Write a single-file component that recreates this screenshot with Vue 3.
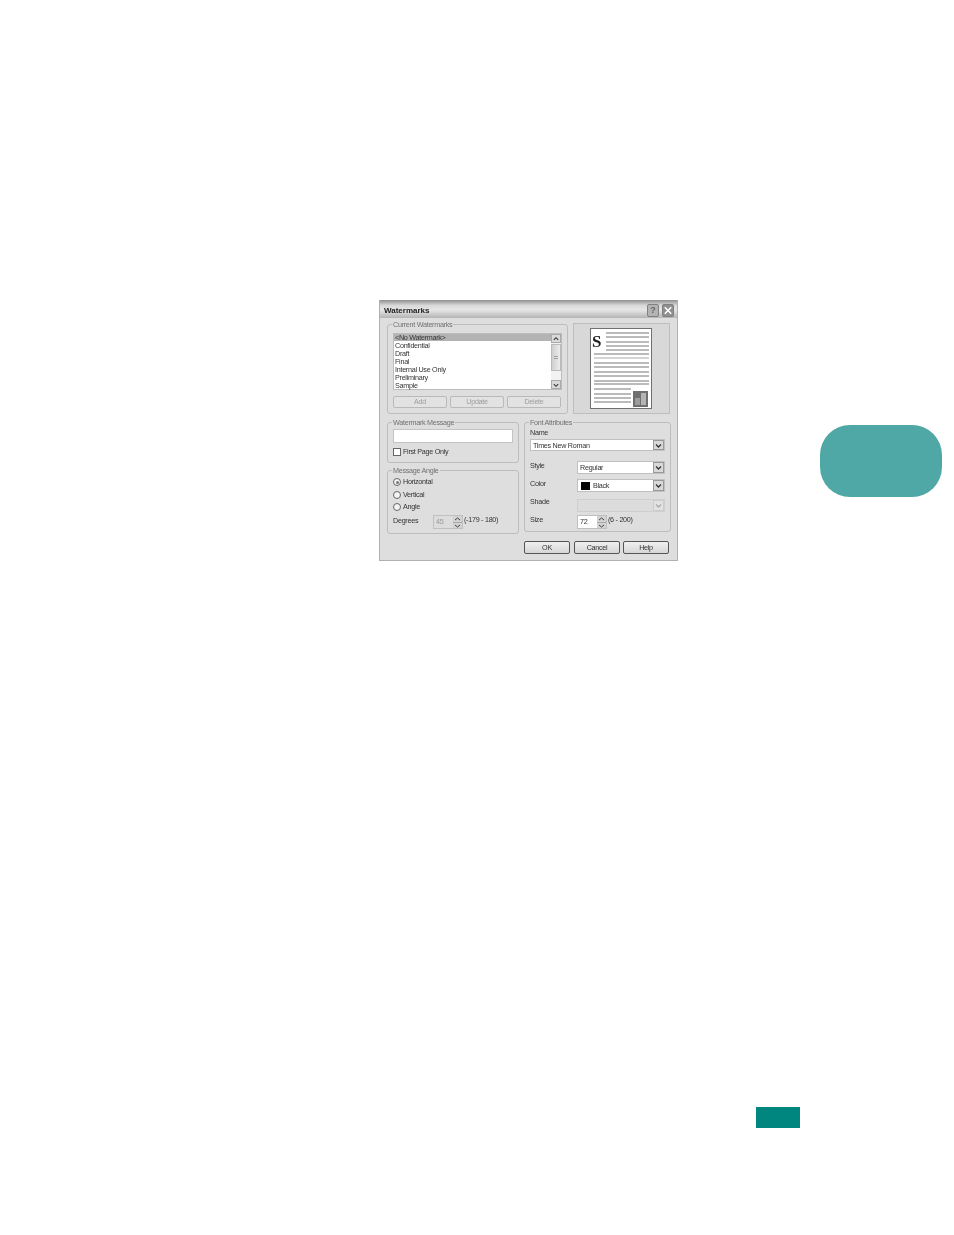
<script setup>
const items = ['<No Watermark>', 'Confidential', 'Draft', 'Final', 'Internal Use Only', 'Preliminary', 'Sample']
const topLines = [333, 337, 342, 346, 350]
const fullLines = [354, 358, 363, 367, 372, 376, 381, 384]
const shortLines = [389, 394, 398, 402]
</script>

<template>
  <div class="page">
    <div class="top-row">
      <section class="dialog">
        <header class="titlebar">
          <span class="title">Watermarks</span>
          <button class="cap cap-help">?</button>
          <button class="cap cap-close">
            <svg viewBox="0 0 11 11" width="11" height="11"><path d="M2 2l7 7M9 2l-7 7" stroke="#fff" stroke-width="1.7" fill="none" /></svg>
          </button>
        </header>

        <div class="body">
          <div class="row-one">
            <fieldset class="group current">
              <legend>Current Watermarks</legend>
              <div class="listbox">
                <ul class="list">
                  <li v-for="(item, i) in items" :key="item" :class="{ selected: i === 0 }">{{ item }}</li>
                </ul>
                <div class="scrollbar">
                  <span class="sb-btn">
                    <svg viewBox="0 0 9 8" width="9" height="8"><path d="M2 5l2.5-2.5L7 5" stroke="#333" stroke-width="1.2" fill="none" /></svg>
                  </span>
                  <span class="sb-track"><span class="sb-thumb"><span class="sb-grip"></span></span></span>
                  <span class="sb-btn">
                    <svg viewBox="0 0 9 8" width="9" height="8"><path d="M2 3l2.5 2.5L7 3" stroke="#333" stroke-width="1.2" fill="none" /></svg>
                  </span>
                </div>
              </div>
              <div class="action-row">
                <button class="btn off">Add</button>
                <button class="btn off">Update</button>
                <button class="btn off">Delete</button>
              </div>
            </fieldset>

            <div class="preview">
              <svg class="paper" viewBox="590 328 62 81" width="62" height="81">
                <rect x="590" y="328" width="62" height="81" fill="#fff" />
                <text x="592" y="347" class="paper-s">S</text>
                <line v-for="y in topLines" :key="y" x1="606" x2="649" :y1="y" :y2="y" stroke="#777" stroke-width="1" />
                <line v-for="(y, i) in fullLines" :key="y" x1="594" x2="649" :y1="y" :y2="y" :stroke="i === 1 ? '#aaa' : '#777'" stroke-width="1" />
                <line v-for="y in shortLines" :key="y" x1="594" x2="631" :y1="y" :y2="y" stroke="#777" stroke-width="1" />
                <rect x="633" y="391" width="15" height="16" fill="#6f6f6f" />
                <rect x="635" y="398" width="5" height="7" fill="#9c9c9c" />
                <rect x="641" y="393" width="5" height="12" fill="#b4b4b4" />
              </svg>
            </div>
          </div>

          <div class="row-two">
            <div class="col-left">
              <fieldset class="group message">
                <legend>Watermark Message</legend>
                <div class="field"></div>
                <label class="check-line"><span class="checkbox"></span>First Page Only</label>
              </fieldset>

              <fieldset class="group angle">
                <legend>Message Angle</legend>
                <div class="radio-line first"><span class="radio on"></span>Horizontal</div>
                <div class="radio-line"><span class="radio"></span>Vertical</div>
                <div class="radio-line"><span class="radio"></span>Angle</div>
                <div class="degrees">
                  <span class="deg-label">Degrees</span>
                  <span class="spin disabled">
                    <span class="spin-value">45</span>
                    <span class="spin-arrows">
                      <span><svg viewBox="0 0 9 6" width="9" height="6"><path d="M2 4l2.5-2L7 4" stroke="#444" stroke-width="1" fill="none" /></svg></span>
                      <span><svg viewBox="0 0 9 6" width="9" height="6"><path d="M2 2l2.5 2L7 2" stroke="#444" stroke-width="1" fill="none" /></svg></span>
                    </span>
                  </span>
                  <span class="range">(-179 - 180)</span>
                </div>
              </fieldset>
            </div>

            <div class="col-right">
              <fieldset class="group font">
                <legend>Font Attributes</legend>
                <div class="name-label">Name</div>
                <div class="combo name-combo">
                  <span class="combo-text">Times New Roman</span>
                  <span class="combo-btn"><svg viewBox="0 0 9 9" width="9" height="9"><path d="M2 3.5l2.5 2.5L7 3.5" stroke="#333" stroke-width="1.3" fill="none" /></svg></span>
                </div>
                <div class="attr style-row">
                  <span class="attr-label">Style</span>
                  <div class="combo">
                    <span class="combo-text">Regular</span>
                    <span class="combo-btn"><svg viewBox="0 0 9 9" width="9" height="9"><path d="M2 3.5l2.5 2.5L7 3.5" stroke="#333" stroke-width="1.3" fill="none" /></svg></span>
                  </div>
                </div>
                <div class="attr color-row">
                  <span class="attr-label">Color</span>
                  <div class="combo">
                    <span class="swatch"></span>
                    <span class="combo-text">Black</span>
                    <span class="combo-btn"><svg viewBox="0 0 9 9" width="9" height="9"><path d="M2 3.5l2.5 2.5L7 3.5" stroke="#333" stroke-width="1.3" fill="none" /></svg></span>
                  </div>
                </div>
                <div class="attr shade-row">
                  <span class="attr-label">Shade</span>
                  <div class="combo combo-off">
                    <span class="combo-text"></span>
                    <span class="combo-btn"><svg viewBox="0 0 9 9" width="9" height="9"><path d="M2 3.5l2.5 2.5L7 3.5" stroke="#aaa" stroke-width="1.3" fill="none" /></svg></span>
                  </div>
                </div>
                <div class="attr size-row">
                  <span class="attr-label">Size</span>
                  <span class="spin">
                    <span class="spin-value">72</span>
                    <span class="spin-arrows">
                      <span><svg viewBox="0 0 9 6" width="9" height="6"><path d="M2 4l2.5-2L7 4" stroke="#444" stroke-width="1" fill="none" /></svg></span>
                      <span><svg viewBox="0 0 9 6" width="9" height="6"><path d="M2 2l2.5 2L7 2" stroke="#444" stroke-width="1" fill="none" /></svg></span>
                    </span>
                  </span>
                  <span class="range">(6 - 200)</span>
                </div>
              </fieldset>

              <div class="dialog-actions">
                <button class="btn strong">OK</button>
                <button class="btn strong">Cancel</button>
                <button class="btn strong">Help</button>
              </div>
            </div>
          </div>
        </div>
      </section>

      <div class="side-tab"></div>
    </div>

    <div class="page-chip"></div>
  </div>
</template>

<style>
html, body { margin: 0; background: #fff; }
</style>

<style scoped>
.page {
  width: 954px;
  height: 1235px;
  background: #fff;
  overflow: hidden;
  font-family: "Liberation Sans", Arial, sans-serif;
  font-size: 7.2px;
  letter-spacing: -0.28px;
  line-height: 8px;
  color: #333;
}
.top-row {
  display: flex;
  align-items: flex-start;
  padding: 300px 0 0 379px;
}
.dialog {
  width: 299px;
  height: 261px;
  box-sizing: border-box;
  background: #dedede;
  border: 1px solid #b0b0b0;
  border-top: 0;
  display: flex;
  flex-direction: column;
  filter: blur(0.35px);
}
.titlebar {
  height: 18px;
  flex: none;
  display: flex;
  align-items: center;
  padding: 2px 3px 0 4px;
  box-sizing: border-box;
  background: linear-gradient(#8f8f8f 0, #d8d8d8 30%, #e6e6e6 55%, #b4b4b4 100%);
}
.title {
  font-weight: 700;
  font-size: 8px;
  letter-spacing: 0;
  color: #222;
  flex: 1;
  padding-top: 1px;
}
.cap {
  width: 12px;
  height: 13px;
  padding: 0;
  border: 1px solid #808080;
  border-radius: 2px;
  display: flex;
  align-items: center;
  justify-content: center;
  font: 700 9px "Liberation Sans", sans-serif;
}
.cap-help { background: #b4b4b4; color: #666; margin-right: 3px; }
.cap-close { background: #8f8f8f; }
.body {
  flex: 1;
  padding: 2px 6px 0 7px;
}
.row-one {
  display: flex;
  align-items: flex-end;
  gap: 5px;
}
.group {
  margin: 0;
  padding: 0 5px;
  min-width: 0;
  box-sizing: border-box;
  border: 1px solid #bdbdbd;
  border-radius: 3px;
}
.group legend {
  padding: 1px 1px 0;
  margin-left: -1px;
  line-height: 8px;
  color: #707070;
}
.current { width: 181px; height: 94px; }
.listbox {
  margin-top: 4px;
  height: 57px;
  box-sizing: border-box;
  background: #fff;
  border: 1px solid #bcbcbc;
  display: flex;
}
.list {
  flex: 1;
  margin: 0;
  padding: 0;
  list-style: none;
  color: #333;
}
.list li { height: 8px; padding-left: 1px; line-height: 8px; margin-bottom: 0; }
.list li.selected { background: #b3b3b3; height: 7px; margin-bottom: 1px; line-height: 7px; }
.scrollbar {
  width: 10px;
  display: flex;
  flex-direction: column;
  background: #f2f2f2;
}
.sb-btn {
  height: 9px;
  background: #dadada;
  border: 1px solid #aaa;
  box-sizing: border-box;
  display: flex;
  align-items: center;
  justify-content: center;
  overflow: hidden;
}
.sb-track { flex: 1; padding: 1px 0 9px; box-sizing: border-box; display: flex; }
.sb-thumb {
  flex: 1;
  background: linear-gradient(90deg, #cfcfcf, #ececec);
  border: 1px solid #bbb;
  display: flex;
  align-items: center;
  justify-content: center;
}
.sb-grip {
  width: 4px;
  height: 1px;
  border-top: 1px solid #a0a0a0;
  border-bottom: 1px solid #a0a0a0;
}
.action-row {
  display: flex;
  gap: 3px;
  margin-top: 6px;
}
.btn {
  width: 54px;
  height: 12px;
  padding: 0;
  font: inherit;
  letter-spacing: inherit;
  line-height: 8px;
  border-radius: 2px;
  background: #e2e2e2;
}
.btn.off {
  border: 1px solid #b9b9b9;
  color: #9c9c9c;
}
.btn.strong {
  width: 46px;
  height: 13px;
  border: 1px solid #555;
  background: linear-gradient(#f0f0f0, #d6d6d6);
  color: #333;
}
.preview {
  width: 97px;
  height: 91px;
  box-sizing: border-box;
  border: 1px solid #bdbdbd;
  background: #d8d8d8;
  padding-right: 1px;
  display: flex;
  align-items: center;
  justify-content: center;
}
.paper { outline: 1px solid #707070; outline-offset: -1px; display: block; }
.paper-s {
  font-family: "Liberation Serif", serif;
  font-weight: 700;
  font-size: 17px;
  fill: #222;
}
.row-two {
  display: flex;
  gap: 5px;
  margin-top: 4px;
}
.col-left { width: 132px; display: flex; flex-direction: column; gap: 3px; }
.message { height: 45px; }
.field {
  margin-top: 2px;
  height: 14px;
  background: #fff;
  border: 1px solid #c4c4c4;
  box-sizing: border-box;
}
.check-line {
  display: flex;
  align-items: center;
  gap: 2px;
  margin-top: 5px;
}
.checkbox {
  width: 8px;
  height: 8px;
  background: #fff;
  border: 1px solid #666;
  box-sizing: border-box;
}
.angle { height: 68px; }
.radio-line {
  display: flex;
  align-items: center;
  gap: 2px;
  height: 8px;
  margin-top: 4.5px;
}
.radio-line.first { margin-top: 3px; }
.radio {
  width: 8px;
  height: 8px;
  box-sizing: border-box;
  border: 1px solid #666;
  border-radius: 50%;
  background: #f4f4f4;
  display: flex;
  align-items: center;
  justify-content: center;
}
.radio.on::after {
  content: "";
  width: 3px;
  height: 3px;
  border-radius: 50%;
  background: #777;
}
.degrees {
  display: flex;
  align-items: center;
  margin-top: 4px;
  height: 14px;
}
.deg-label { width: 40px; margin-bottom: 3px; }
.range { margin-bottom: 4px; }
.spin {
  width: 30px;
  height: 14px;
  box-sizing: border-box;
  background: #fff;
  border: 1px solid #c0c0c0;
  display: flex;
  align-items: center;
  justify-content: space-between;
  padding-left: 2px;
  margin-right: 1px;
}
.spin.disabled { background: #dcdcdc; color: #999; }
.spin-arrows { display: flex; flex-direction: column; width: 9px; height: 12px; }
.spin-arrows span {
  height: 6px;
  background: #d2d2d2;
  display: flex;
  overflow: hidden;
}
.spin-arrows span + span { border-top: 1px solid #aaa; }
.col-right { width: 147px; }
.font { height: 114px; }
.name-label { margin-top: 2px; }
.combo {
  width: 135px;
  height: 12px;
  box-sizing: border-box;
  background: #fff;
  border: 1px solid #c0c0c0;
  display: flex;
  align-items: center;
  padding-left: 2px;
  margin-top: 2px;
}
.combo-text { flex: 1; }
.name-combo .combo-text { padding-top: 2px; }
.combo-btn {
  width: 11px;
  height: 100%;
  flex: none;
  background: #d8d8d8;
  border: 1px solid #999;
  box-sizing: border-box;
  display: flex;
  align-items: center;
  justify-content: center;
  overflow: hidden;
}
.attr {
  display: flex;
  align-items: flex-start;
  margin-top: 7px;
}
.attr-label { width: 47px; flex: none; }
.attr .combo { width: 88px; height: 13px; margin-top: 1px; }
.style-row { margin-top: 9px; }
.style-row .attr-label { padding-top: 2px; }
.color-row { margin-top: 4px; }
.color-row .attr-label { padding-top: 2px; }
.shade-row { margin-top: 6px; }
.size-row { margin-top: 3px; align-items: center; }
.size-row .attr-label { margin-bottom: 4px; }
.combo-off { background: #dcdcdc !important; border-color: #cfcfcf !important; }
.combo-off .combo-btn { background: #e2e2e2; border-color: #ccc; }
.swatch { width: 9px; height: 8px; background: #000; margin: 0 3px 0 1px; }
.dialog-actions {
  display: flex;
  gap: 4px;
  margin-top: 9px;
}
.dialog-actions .btn:last-child { margin-left: -1px; }
.side-tab {
  width: 122px;
  height: 72px;
  margin: 125px 0 0 142px;
  border-radius: 30px;
  background: #4fa8a6;
  flex: none;
}
.page-chip {
  width: 44px;
  height: 21px;
  margin: 546px 0 0 756px;
  background: #00857f;
}
</style>
